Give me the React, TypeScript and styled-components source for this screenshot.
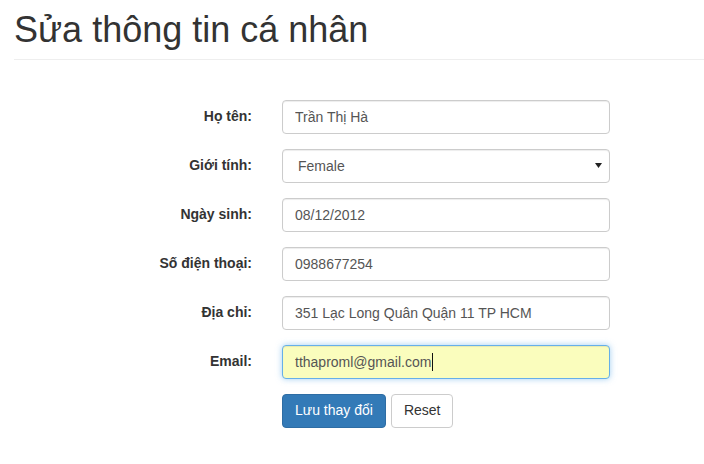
import React from "react";
import styled, { createGlobalStyle } from "styled-components";

const Global = createGlobalStyle`
  html, body { margin: 0; padding: 0; background: #fff; }
  body {
    font-family: "Liberation Sans", Arial, Helvetica, sans-serif;
    font-size: 14px;
    line-height: 1.42857;
    color: #333;
  }
  * { box-sizing: border-box; }
`;

const Page = styled.div`
  padding-left: 14px;
`;

const Header = styled.div`
  padding-top: 10px;
  padding-bottom: 9px;
  border-bottom: 1px solid #eee;
`;

const Title = styled.h1`
  margin: 0;
  font-family: "Liberation Sans", Arial, Helvetica, sans-serif;
  font-size: 36px;
  font-weight: 400;
  line-height: 1.1;
  color: #333;
`;

const Form = styled.form`
  margin-top: 40px;
  display: grid;
  grid-template-columns: 238px 328px;
  column-gap: 30px;
  row-gap: 15px;
`;

const Label = styled.label`
  text-align: right;
  font-weight: 700;
  padding-top: 7px;
  height: 34px;
  color: #333;
`;

const Input = styled.input<{ $focused?: boolean; $autofill?: boolean }>`
  display: block;
  width: 100%;
  height: 34px;
  padding: 6px 12px;
  font-family: inherit;
  font-size: 14px;
  line-height: 1.42857;
  color: #555;
  background: ${(p) => (p.$autofill ? "#fafdbd" : "#fff")};
  border: 1px solid ${(p) => (p.$focused ? "#66afe9" : "#ccc")};
  border-radius: 4px;
  box-shadow: ${(p) =>
    p.$focused
      ? "inset 0 1px 1px rgba(0,0,0,.075), 0 0 6px rgba(102,175,233,.6)"
      : "inset 0 1px 1px rgba(0,0,0,.075)"};
  outline: none;
  margin: 0;
`;

const SelectWrap = styled.div`
  position: relative;
`;

const Select = styled.select`
  display: block;
  width: 100%;
  height: 34px;
  padding: 6px 12px 6px 15px;
  font-family: inherit;
  font-size: 14px;
  color: #555;
  background: #fff;
  border: 1px solid #ccc;
  border-radius: 4px;
  box-shadow: inset 0 1px 1px rgba(0,0,0,.075);
  appearance: none;
  -webkit-appearance: none;
  outline: none;
  margin: 0;
`;

const Arrow = styled.svg`
  position: absolute;
  right: 8px;
  top: 14px;
  pointer-events: none;
`;

const Buttons = styled.div`
  grid-column: 2;
  display: flex;
  gap: 5px;
`;

const Button = styled.button<{ $primary?: boolean }>`
  height: 34px;
  padding: 6px 12px;
  font-family: inherit;
  font-size: 14px;
  line-height: 1.42857;
  border-radius: 4px;
  border: 1px solid ${(p) => (p.$primary ? "#2e6da4" : "#ccc")};
  background: ${(p) => (p.$primary ? "#337ab7" : "#fff")};
  color: ${(p) => (p.$primary ? "#fff" : "#333")};
  cursor: pointer;
`;

const CaretWrap = styled.div`
  position: relative;
`;

const Caret = styled.span`
  position: absolute;
  left: 150px;
  top: 8px;
  width: 1px;
  height: 18px;
  background: #111;
  pointer-events: none;
`;

export default function App() {
  return (
    <>
      <Global />
      <Page>
        <Header>
          <Title>Sửa thông tin cá nhân</Title>
        </Header>
        <Form onSubmit={(e) => e.preventDefault()}>
          <Label>Họ tên:</Label>
          <Input defaultValue="Trần Thị Hà" />

          <Label>Giới tính:</Label>
          <SelectWrap>
            <Select defaultValue="Female">
              <option>Male</option>
              <option>Female</option>
            </Select>
            <Arrow width="7" height="5" viewBox="0 0 7 5">
              <path d="M0 0 H7 L3.5 5 Z" fill="#222" />
            </Arrow>
          </SelectWrap>

          <Label>Ngày sinh:</Label>
          <Input defaultValue="08/12/2012" />

          <Label>Số điện thoại:</Label>
          <Input defaultValue="0988677254" />

          <Label>Địa chỉ:</Label>
          <Input defaultValue="351 Lạc Long Quân Quận 11 TP HCM" />

          <Label>Email:</Label>
          <CaretWrap>
            <Input $focused $autofill defaultValue="tthaproml@gmail.com" />
            <Caret />
          </CaretWrap>

          <Buttons>
            <Button $primary type="submit">Lưu thay đổi</Button>
            <Button type="reset">Reset</Button>
          </Buttons>
        </Form>
      </Page>
    </>
  );
}
